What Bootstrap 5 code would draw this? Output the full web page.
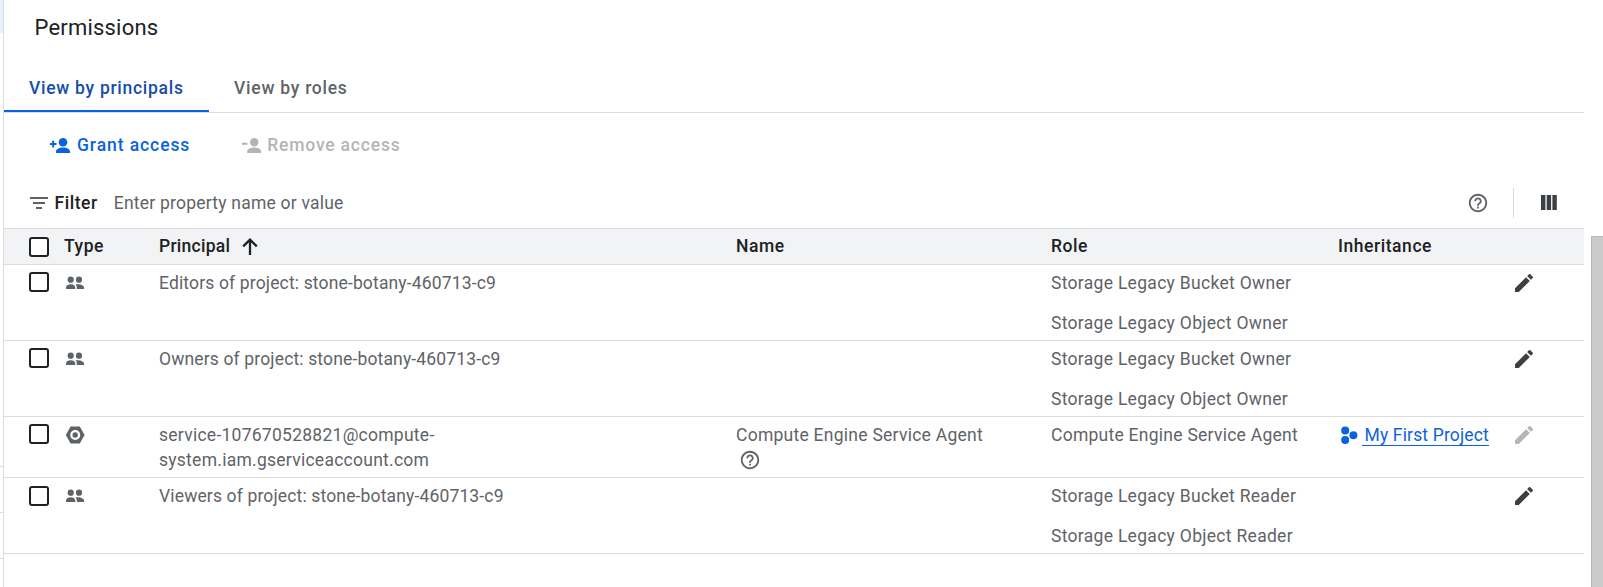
<!DOCTYPE html>
<html lang="en">
<head>
<meta charset="utf-8">
<title>Permissions</title>
<link href="https://cdn.jsdelivr.net/npm/bootstrap@5.3.0/dist/css/bootstrap.min.css" rel="stylesheet">
<style>
body{font-family:Roboto,"Liberation Sans",sans-serif;font-size:17.5px;line-height:25px;color:#5f6368;height:587px;background:#fff}
svg{display:block;fill:currentColor;flex-shrink:0}
.rail{width:4px;border-right:1px solid #dadce0}
.rail-active{height:33px;background:#e8f0fe}
.rail-gap{height:433px}
.rail-line{height:46px;border-top:1px solid #dadce0}
.panel{width:1580px}
.panel-title{font-size:22px;line-height:28px;color:#202124;padding:14px 0 0 30.5px;height:64px;font-weight:400;margin:0;letter-spacing:.2px}
.view-tabs{height:49px;border-bottom:1px solid #dadce0}
.view-tabs .nav-link{height:48px;padding:12px 24px 0 25px;font-weight:500;color:#5f6368;border-radius:0;letter-spacing:.75px;white-space:nowrap}
.view-tabs .nav-link.active{color:#174ea6;border-bottom:2px solid #0b62e0;width:205px;letter-spacing:.72px}
.actions{height:64px;padding-left:46px}
.actions .btn{font:500 17.5px/25px Roboto,"Liberation Sans",sans-serif;padding:0;border:0;color:#0b62e0;letter-spacing:.92px;gap:7px}
.actions .btn:disabled{color:#b5b5b5;opacity:1;margin-left:52px;gap:5px;letter-spacing:.8px}
.filter-bar{height:51px;padding:0 27px 0 26px}
.filter-label{margin-left:6.5px;letter-spacing:.55px;line-height:23px;padding-top:1px;font-weight:500}
.filter-hint{margin-left:16px;letter-spacing:.22px;padding-top:1px}
.dark-text{color:#202124}
.vr-line{width:1px;height:30px;background:#dadce0;margin:0 27px 0 24px}
.perm-table{table-layout:fixed;border-collapse:separate;border-spacing:0;width:1580px;margin:0;color:#5f6368;line-height:25px}
.perm-table>:not(caption)>*>*{padding:6px 0 4px;border:0 solid #dadce0;border-bottom-width:1px;background:none;box-shadow:none;color:inherit;white-space:nowrap;letter-spacing:.15px}
.perm-table>thead>tr>th{background:#f1f3f4;border-top-width:1px;color:#202124;font-weight:500;height:37px;padding:5px 0;letter-spacing:.55px;vertical-align:top}
.perm-table .form-check-input{width:20px;height:20px;margin:1px 0 0 25px;border:2px solid #202124;border-radius:3px;display:block;float:none;background:#fff}
.perm-table thead .form-check-input{margin-top:3px}
.perm-table tbody tr:last-child .form-check-input{margin-top:2px}
.perm-table>tbody>tr>.wide-text{letter-spacing:.3px}
.perm-table>tbody>tr>.agent-text{letter-spacing:.26px}
.sort-label{letter-spacing:.25px}
.sort-arrow{margin:0 0 1px 12px}
.role-second{margin-top:15px}
.edit-cell svg{margin:0 0 0 -1px}
.help-name{margin:1px 0 0 3px}
.project{color:#0b62e0;text-decoration:none;border-bottom:1px solid #0b62e0;line-height:25px;height:23px;padding-left:3px;margin-left:4px}
.project-icon{color:#0b62e0;margin:3px 0 0 2.5px}
.scroll-thumb{width:12px;height:351px;margin:236px 0 0 7px;background:#cbcbcb;border-left:1px solid #b8b8b8;border-top:1px solid #b8b8b8}
.pencil{color:#3c4043}.pencil.off{color:#b5b5b5}
</style>
</head>
<body class="d-flex overflow-hidden">
<svg class="d-none">
<symbol id="people" viewBox="0 0 22 20"><circle cx="6.700" cy="8.700" r="3.100"/><circle cx="15" cy="8.700" r="3.100"/><path d="M2 18V16.900C2 14.400 4.500 13.300 6.800 13.300s4.500 1.100 4.500 3.600V18zM12.800 18v-1.300c0-1.300-.5-2.300-1.300-3.100 3-.9 8.600.1 8.600 3.300V18z"/></symbol>
<symbol id="edit" viewBox="0 0 24 24"><path d="M3 17.250V21h3.750L17.810 9.940l-3.750-3.750L3 17.250zM20.710 7.040a1 1 0 0 0 0-1.410l-2.340-2.340a1 1 0 0 0-1.410 0l-1.830 1.830 3.750 3.750 1.830-1.830z"/></symbol>
<symbol id="help" viewBox="0 0 24 24"><path d="M11 18h2v-2h-2v2zm1-16C6.480 2 2 6.480 2 12s4.480 10 10 10 10-4.480 10-10S17.520 2 12 2zm0 18c-4.410 0-8-3.590-8-8s3.590-8 8-8 8 3.590 8 8-3.590 8-8 8zm0-14c-2.210 0-4 1.790-4 4h2c0-1.100.9-2 2-2s2 .9 2 2c0 2-3 1.750-3 5h2c0-2.250 3-2.500 3-5 0-2.210-1.790-4-4-4z"/></symbol>
</svg>
<aside class="rail flex-shrink-0"><div class="rail-active"></div><div class="rail-gap"></div><div class="rail-line"></div><div class="rail-line"></div><div class="rail-line"></div></aside>
<main class="panel flex-shrink-0">
<h1 class="panel-title">Permissions</h1>
<nav class="nav view-tabs flex-nowrap"><a class="nav-link active" href="#">View by principals</a><a class="nav-link" href="#">View by roles</a></nav>
<div class="actions d-flex align-items-center">
<button class="btn d-flex align-items-center"><svg width="20" height="15" viewBox="0 0 20 15"><circle cx="13" cy="4.300" r="4.300"/><path d="M6 15v-1.700c0-2.500 4-3.800 7-3.800s7 1.300 7 3.800V15zM0 5h2.200V2.800h2V5h2.300v2H4.200v2.500h-2V7H0z"/></svg><span>Grant access</span></button>
<button class="btn d-flex align-items-center" disabled><svg width="20" height="16" viewBox="0 0 20 16"><circle cx="12.200" cy="5.300" r="4.200"/><path d="M5.200 16v-1.700c0-2.500 4-3.800 7-3.800s7 1.300 7 3.800V16zM0 5.800h5.500v2H0z"/></svg><span>Remove access</span></button>
</div>
<div class="filter-bar d-flex align-items-center">
<svg width="18" height="12" viewBox="0 0 18 12"><path d="M0 0h18v2H0zM3 5h12v2H3zM6 10h6v2H6z"/></svg>
<span class="filter-label dark-text">Filter</span><span class="filter-hint">Enter property name or value</span>
<svg class="ms-auto" width="22" height="22"><use href="#help"/></svg><div class="vr-line"></div>
<svg width="16" height="15" class="pencil"><path d="M0 0h4.400v15H0zM5.700 0h4.400v15H5.700zM11.400 0h4.400v15h-4.400z"/></svg>
</div>
<table class="table perm-table">
<colgroup><col style="width:60px"><col style="width:95px"><col style="width:577px"><col style="width:315px"><col style="width:287px"><col style="width:175px"><col></colgroup>
<thead><tr><th><input class="form-check-input" type="checkbox"></th><th>Type</th><th><div class="d-flex align-items-center"><span class="sort-label">Principal</span><svg class="sort-arrow" width="16" height="17" viewBox="0 0 16 17"><path d="M8 17V1.800M1.200 8.400 8 1.600l6.800 6.800" fill="none" stroke="currentColor" stroke-width="2.300"/></svg></div></th><th>Name</th><th>Role</th><th>Inheritance</th><th></th></tr></thead>
<tbody>
<tr><td><input class="form-check-input" type="checkbox"></td><td><svg width="22" height="20"><use href="#people"/></svg></td><td>Editors of project: stone-botany-460713-c9</td><td></td><td class="wide-text">Storage Legacy Bucket Owner<div class="role-second">Storage Legacy Object Owner</div></td><td></td><td class="edit-cell"><svg class="pencil" width="24" height="24"><use href="#edit"/></svg></td></tr>
<tr><td><input class="form-check-input" type="checkbox"></td><td><svg width="22" height="20"><use href="#people"/></svg></td><td>Owners of project: stone-botany-460713-c9</td><td></td><td class="wide-text">Storage Legacy Bucket Owner<div class="role-second">Storage Legacy Object Owner</div></td><td></td><td class="edit-cell"><svg class="pencil" width="24" height="24"><use href="#edit"/></svg></td></tr>
<tr><td><input class="form-check-input" type="checkbox"></td><td><svg width="22" height="22" viewBox="0 0 22 22"><path fill-rule="evenodd" d="M6.600 3.500h9.200L20.600 12l-4.800 8.500H6.600L1.800 12zM11.200 7a5 5 0 1 0 0 10 5 5 0 0 0 0-10z"/><circle cx="11.200" cy="12" r="2.700"/></svg></td><td class="agent-text">service-107670528821@compute-<br>system.iam.gserviceaccount.com</td><td class="agent-text">Compute Engine Service Agent<svg class="help-name" width="22" height="22"><use href="#help"/></svg></td><td class="agent-text">Compute Engine Service Agent</td><td><div class="d-flex"><svg class="project-icon" width="17" height="19" viewBox="0 0 17 19"><circle cx="4.200" cy="4.500" r="4"/><circle cx="4.200" cy="14" r="4"/><circle cx="12.400" cy="9.200" r="4"/></svg><a class="project" href="#">My First Project</a></div></td><td class="edit-cell"><svg class="pencil off" width="24" height="24"><use href="#edit"/></svg></td></tr>
<tr><td><input class="form-check-input" type="checkbox"></td><td><svg width="22" height="20"><use href="#people"/></svg></td><td>Viewers of project: stone-botany-460713-c9</td><td></td><td class="wide-text">Storage Legacy Bucket Reader<div class="role-second">Storage Legacy Object Reader</div></td><td></td><td class="edit-cell"><svg class="pencil" width="24" height="24"><use href="#edit"/></svg></td></tr>
</tbody></table>
</main>
<div class="scroll-thumb flex-shrink-0"></div>
<script src="https://cdn.jsdelivr.net/npm/bootstrap@5.3.0/dist/js/bootstrap.bundle.min.js"></script>
</body></html>
